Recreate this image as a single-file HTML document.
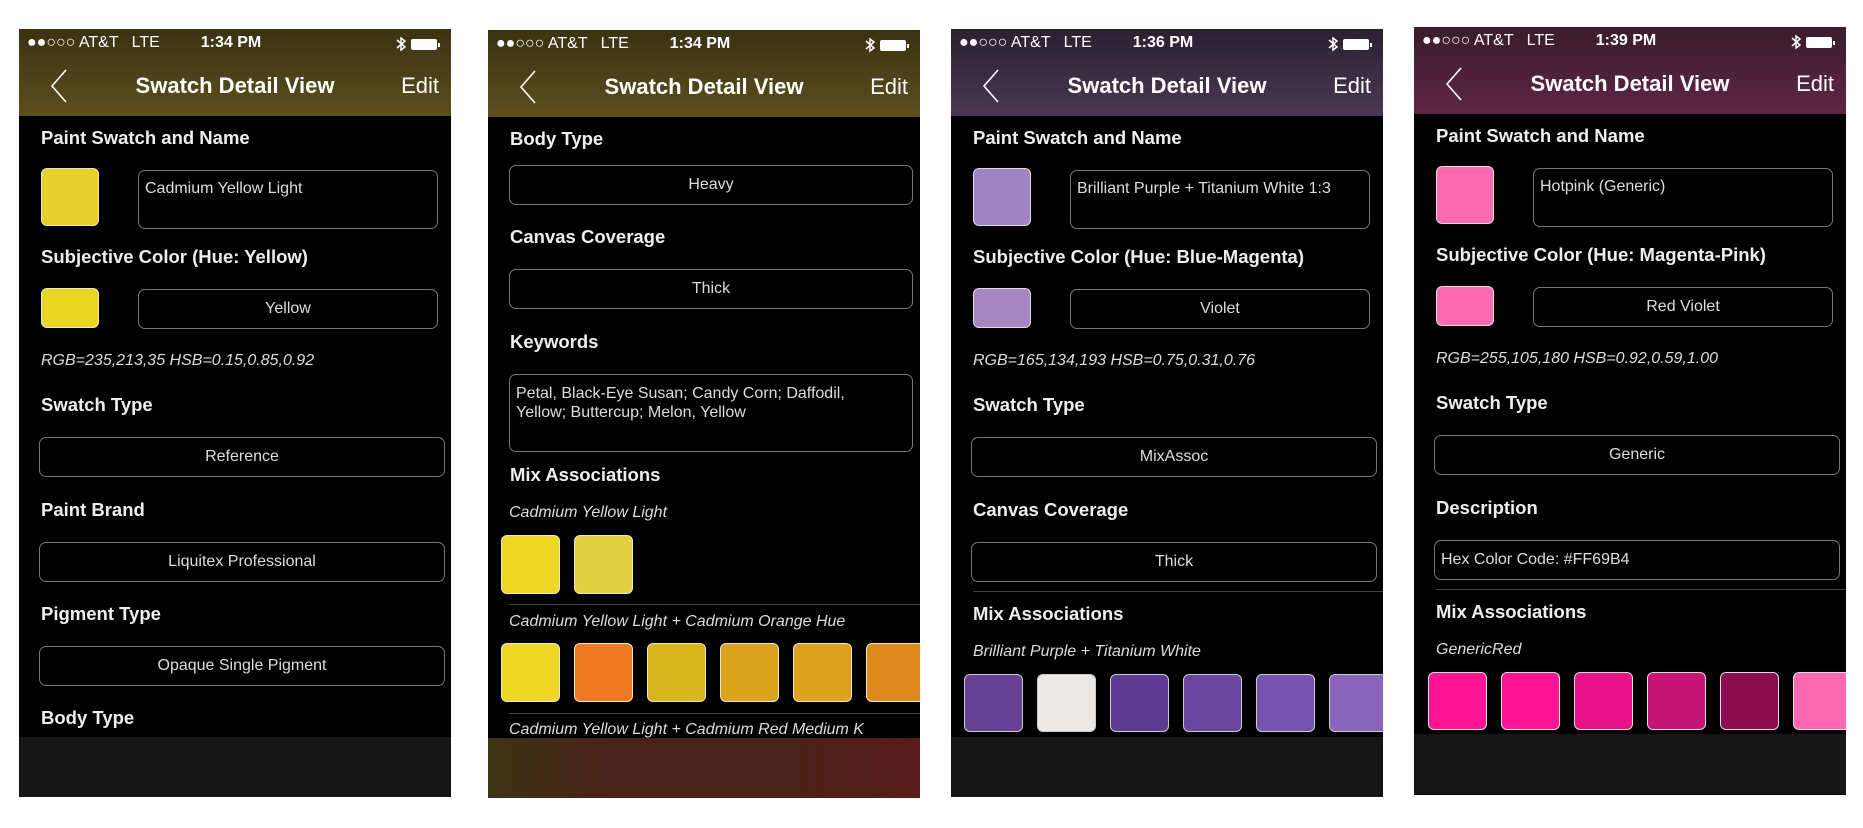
<!DOCTYPE html>
<html><head><meta charset="utf-8">
<style>
*{margin:0;padding:0;box-sizing:border-box}
body{width:1863px;height:828px;background:#fff;position:relative;overflow:hidden;font-family:"Liberation Sans",sans-serif;color:#eee}
.ph{position:absolute;width:432px;height:768px;background:#000;overflow:hidden}
.nav{position:absolute;left:0;top:0;width:432px;height:87px}
.sb{position:absolute;top:5px;left:8px;font-size:16px;color:#fff}
.tm{position:absolute;top:5px;left:0;width:432px;text-align:center;font-size:16px;font-weight:bold;color:#fff;padding-right:8px}
.bt{position:absolute;top:6px;right:8px;width:60px;height:18px}
.ttl{position:absolute;top:44px;left:0;width:432px;text-align:center;font-size:22px;font-weight:bold;color:#fff}
.edit{position:absolute;top:44px;right:12px;font-size:22px;color:#fff}
.back{position:absolute;left:30px;top:39px}
.lb{position:absolute;left:22px;font-size:18.5px;font-weight:bold;color:#eee;line-height:20px}
.it{position:absolute;left:22px;font-size:16px;font-style:italic;color:#ddd;line-height:18px}
.fd{position:absolute;border:1.5px solid #777;border-radius:7px;font-size:16px;color:#ddd;text-align:center;display:flex;align-items:center;justify-content:center}
.fl{justify-content:flex-start;align-items:flex-start;text-align:left;padding:9px 6px}
.sw{position:absolute;border-radius:6px;border:1.5px solid #eee8c0}
.sep{position:absolute;height:1px;background:#444}
.tab{position:absolute;left:0;top:708px;width:432px;height:60px;background:#161616}
</style></head><body>

<!-- PHONE 1 -->
<div class="ph" style="left:19px;top:29px">
 <div class="nav" style="background:linear-gradient(#3b3212,#5c4e1d)">
  <div class="sb">●●○○○ AT&amp;T &nbsp; LTE</div><div class="tm">1:34 PM</div>
  <svg class="bt" viewBox="0 0 60 18"><path d="M14 5l8 7-4 3V3l4 3-8 7" stroke="#fff" stroke-width="1.5" fill="none"/><rect x="28" y="4" width="26" height="11" rx="2" fill="#fff"/><rect x="55" y="8" width="2" height="4" fill="#fff"/></svg>
  <svg class="back" width="20" height="36"><path d="M17 2L3 18l14 16" stroke="#fff" stroke-width="1.6" fill="none"/></svg>
  <div class="ttl">Swatch Detail View</div><div class="edit">Edit</div>
 </div>
 <div class="lb" style="top:99px">Paint Swatch and Name</div>
 <div class="sw" style="left:22px;top:139px;width:58px;height:58px;background:#e6d22a"></div>
 <div class="fd fl" style="left:119px;top:141px;width:300px;height:59px">Cadmium Yellow Light</div>
 <div class="lb" style="top:218px">Subjective Color (Hue: Yellow)</div>
 <div class="sw" style="left:22px;top:259px;width:58px;height:40px;background:#ebd523"></div>
 <div class="fd" style="left:119px;top:260px;width:300px;height:40px">Yellow</div>
 <div class="it" style="top:323px">RGB=235,213,35 HSB=0.15,0.85,0.92</div>
 <div class="lb" style="top:366px">Swatch Type</div>
 <div class="fd" style="left:20px;top:408px;width:406px;height:40px">Reference</div>
 <div class="lb" style="top:471px">Paint Brand</div>
 <div class="fd" style="left:20px;top:513px;width:406px;height:40px">Liquitex Professional</div>
 <div class="lb" style="top:575px">Pigment Type</div>
 <div class="fd" style="left:20px;top:617px;width:406px;height:40px">Opaque Single Pigment</div>
 <div class="lb" style="top:679px">Body Type</div>
 <div class="tab"></div>
</div>

<!-- PHONE 2 -->
<div class="ph" style="left:488px;top:30px">
 <div class="nav" style="background:linear-gradient(#3b3212,#5c4e1d)">
  <div class="sb">●●○○○ AT&amp;T &nbsp; LTE</div><div class="tm">1:34 PM</div>
  <svg class="bt" viewBox="0 0 60 18"><path d="M14 5l8 7-4 3V3l4 3-8 7" stroke="#fff" stroke-width="1.5" fill="none"/><rect x="28" y="4" width="26" height="11" rx="2" fill="#fff"/><rect x="55" y="8" width="2" height="4" fill="#fff"/></svg>
  <svg class="back" width="20" height="36"><path d="M17 2L3 18l14 16" stroke="#fff" stroke-width="1.6" fill="none"/></svg>
  <div class="ttl">Swatch Detail View</div><div class="edit">Edit</div>
 </div>
 <div class="lb" style="top:99px">Body Type</div>
 <div class="fd" style="left:21px;top:135px;width:404px;height:40px">Heavy</div>
 <div class="lb" style="top:197px">Canvas Coverage</div>
 <div class="fd" style="left:21px;top:239px;width:404px;height:40px">Thick</div>
 <div class="lb" style="top:302px">Keywords</div>
 <div class="fd fl" style="left:21px;top:344px;width:404px;height:78px;line-height:19px;padding-right:40px">Petal, Black-Eye Susan; Candy Corn; Daffodil, Yellow; Buttercup; Melon, Yellow</div>
 <div class="lb" style="top:435px">Mix Associations</div>
 <div class="it" style="left:21px;top:474px">Cadmium Yellow Light</div>
 <div class="sw" style="left:13px;top:505px;width:59px;height:59px;background:#efd825"></div>
 <div class="sw" style="left:86px;top:505px;width:59px;height:59px;background:#e3d040"></div>
 <div class="sep" style="left:21px;top:574px;width:411px"></div>
 <div class="it" style="left:21px;top:583px">Cadmium Yellow Light + Cadmium Orange Hue</div>
 <div class="sw" style="left:13px;top:613px;width:59px;height:59px;background:#efd825"></div>
 <div class="sw" style="left:86px;top:613px;width:59px;height:59px;background:#ef7a22"></div>
 <div class="sw" style="left:159px;top:613px;width:59px;height:59px;background:#d9b61c"></div>
 <div class="sw" style="left:232px;top:613px;width:59px;height:59px;background:#dca21c"></div>
 <div class="sw" style="left:305px;top:613px;width:59px;height:59px;background:#dda11e"></div>
 <div class="sw" style="left:378px;top:613px;width:59px;height:59px;background:#dc8a1c"></div>
 <div class="sep" style="left:21px;top:683px;width:411px"></div>
 <div class="it" style="left:21px;top:691px">Cadmium Yellow Light + Cadmium Red Medium K</div>
 <div class="tab" style="background:linear-gradient(90deg,#3e3415,#4a2218 30%,#4a2217 70%,#5a1c18)"></div>
</div>

<!-- PHONE 3 -->
<div class="ph" style="left:951px;top:29px">
 <div class="nav" style="background:linear-gradient(#2b2131,#4a3753)">
  <div class="sb">●●○○○ AT&amp;T &nbsp; LTE</div><div class="tm">1:36 PM</div>
  <svg class="bt" viewBox="0 0 60 18"><path d="M14 5l8 7-4 3V3l4 3-8 7" stroke="#fff" stroke-width="1.5" fill="none"/><rect x="28" y="4" width="26" height="11" rx="2" fill="#fff"/><rect x="55" y="8" width="2" height="4" fill="#fff"/></svg>
  <svg class="back" width="20" height="36"><path d="M17 2L3 18l14 16" stroke="#fff" stroke-width="1.6" fill="none"/></svg>
  <div class="ttl">Swatch Detail View</div><div class="edit">Edit</div>
 </div>
 <div class="lb" style="top:99px">Paint Swatch and Name</div>
 <div class="sw" style="left:22px;top:139px;width:58px;height:58px;background:#a083c4;border-color:#ddd"></div>
 <div class="fd fl" style="left:119px;top:141px;width:300px;height:59px">Brilliant Purple + Titanium White 1:3</div>
 <div class="lb" style="top:218px">Subjective Color (Hue: Blue-Magenta)</div>
 <div class="sw" style="left:22px;top:259px;width:58px;height:40px;background:#a586c1;border-color:#ddd"></div>
 <div class="fd" style="left:119px;top:260px;width:300px;height:40px">Violet</div>
 <div class="it" style="top:323px">RGB=165,134,193 HSB=0.75,0.31,0.76</div>
 <div class="lb" style="top:366px">Swatch Type</div>
 <div class="fd" style="left:20px;top:408px;width:406px;height:40px">MixAssoc</div>
 <div class="lb" style="top:471px">Canvas Coverage</div>
 <div class="fd" style="left:20px;top:513px;width:406px;height:40px">Thick</div>
 <div class="sep" style="left:22px;top:562px;width:410px"></div>
 <div class="lb" style="top:575px">Mix Associations</div>
 <div class="it" style="top:614px">Brilliant Purple + Titanium White</div>
 <div class="sw" style="left:13px;top:645px;width:59px;height:58px;background:#674196;border-color:#ccc"></div>
 <div class="sw" style="left:86px;top:645px;width:59px;height:58px;background:#ebe8e6;border-color:#ccc"></div>
 <div class="sw" style="left:159px;top:645px;width:59px;height:58px;background:#5f3a94;border-color:#ccc"></div>
 <div class="sw" style="left:232px;top:645px;width:59px;height:58px;background:#6a44a0;border-color:#ccc"></div>
 <div class="sw" style="left:305px;top:645px;width:59px;height:58px;background:#7852b0;border-color:#ccc"></div>
 <div class="sw" style="left:378px;top:645px;width:59px;height:58px;background:#8a64bb;border-color:#ccc"></div>
 <div class="tab"></div>
</div>

<!-- PHONE 4 -->
<div class="ph" style="left:1414px;top:27px">
 <div class="nav" style="background:linear-gradient(#3a1d2a,#5e2646)">
  <div class="sb">●●○○○ AT&amp;T &nbsp; LTE</div><div class="tm">1:39 PM</div>
  <svg class="bt" viewBox="0 0 60 18"><path d="M14 5l8 7-4 3V3l4 3-8 7" stroke="#fff" stroke-width="1.5" fill="none"/><rect x="28" y="4" width="26" height="11" rx="2" fill="#fff"/><rect x="55" y="8" width="2" height="4" fill="#fff"/></svg>
  <svg class="back" width="20" height="36"><path d="M17 2L3 18l14 16" stroke="#fff" stroke-width="1.6" fill="none"/></svg>
  <div class="ttl">Swatch Detail View</div><div class="edit">Edit</div>
 </div>
 <div class="lb" style="top:99px">Paint Swatch and Name</div>
 <div class="sw" style="left:22px;top:139px;width:58px;height:58px;background:#ff69b4;border-color:#ddd"></div>
 <div class="fd fl" style="left:119px;top:141px;width:300px;height:59px">Hotpink (Generic)</div>
 <div class="lb" style="top:218px">Subjective Color (Hue: Magenta-Pink)</div>
 <div class="sw" style="left:22px;top:259px;width:58px;height:40px;background:#ff69b4;border-color:#ddd"></div>
 <div class="fd" style="left:119px;top:260px;width:300px;height:40px">Red Violet</div>
 <div class="it" style="top:323px">RGB=255,105,180 HSB=0.92,0.59,1.00</div>
 <div class="lb" style="top:366px">Swatch Type</div>
 <div class="fd" style="left:20px;top:408px;width:406px;height:40px">Generic</div>
 <div class="lb" style="top:471px">Description</div>
 <div class="fd" style="left:20px;top:513px;width:406px;height:40px;justify-content:flex-start;padding-left:6px">Hex Color Code: #FF69B4</div>
 <div class="sep" style="left:22px;top:562px;width:410px"></div>
 <div class="lb" style="top:575px">Mix Associations</div>
 <div class="it" style="top:614px">GenericRed</div>
 <div class="sw" style="left:14px;top:645px;width:59px;height:58px;background:#ff1493;border-color:#ddd"></div>
 <div class="sw" style="left:87px;top:645px;width:59px;height:58px;background:#ff1493;border-color:#ddd"></div>
 <div class="sw" style="left:160px;top:645px;width:59px;height:58px;background:#e8128a;border-color:#ddd"></div>
 <div class="sw" style="left:233px;top:645px;width:59px;height:58px;background:#c71477;border-color:#ddd"></div>
 <div class="sw" style="left:306px;top:645px;width:59px;height:58px;background:#8b0c52;border-color:#ddd"></div>
 <div class="sw" style="left:379px;top:645px;width:59px;height:58px;background:#ff69b4;border-color:#ddd"></div>
 <div class="tab" style="top:707px"></div>
</div>
</body></html>
